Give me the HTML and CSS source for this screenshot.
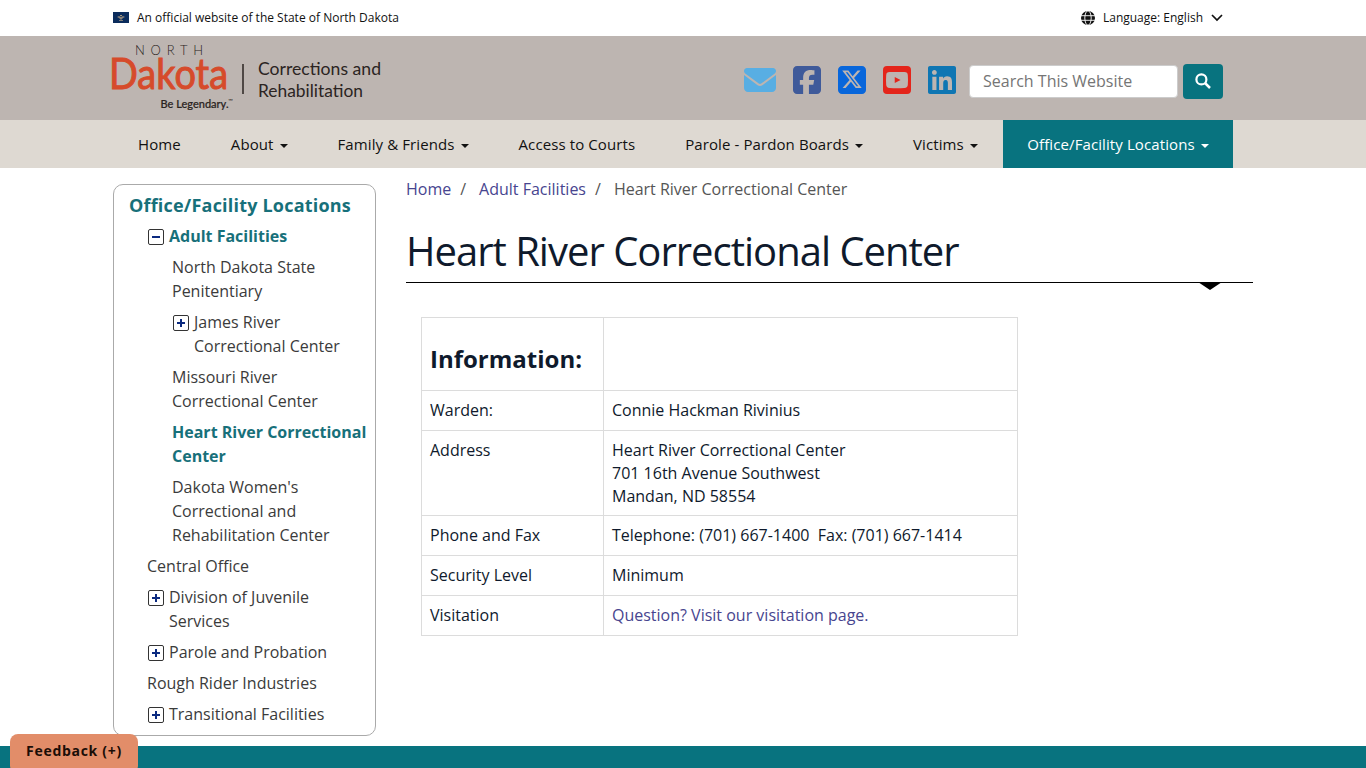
FILE: index.html
```html
<!DOCTYPE html>
<html lang="en">
<head>
    <meta charset="UTF-8">
    <meta name="viewport" content="width=device-width, initial-scale=1.0">
    <title>Heart River Correctional Center</title>
    <link rel="stylesheet" href="styles.css">
</head>
<body>

    <div class="topbar">
        <div class="container topbar-inner">
            <div class="official">
                <svg class="flag" viewBox="0 0 16 11">
                    <rect width="16" height="11" fill="#0b2c5c"/>
                    <path d="M4 5l2-1 2 1 2-1 2 1-2 1-2 2-2-2z" fill="#8b8378"/>
                    <path d="M7 3h2v1H7zM6 8h4v.7H6z" fill="#a79a82"/>
                </svg>
                <span>An official website of the State of North Dakota</span>
            </div>
            <div class="language">
                <svg class="globe" viewBox="0 0 14 14">
                    <circle cx="7" cy="7" r="7" fill="#111"/>
                    <path d="M0 4.7h14M0 9.3h14" stroke="#fff" stroke-width=".9"/>
                    <ellipse cx="7" cy="7" rx="3.2" ry="7.2" fill="none" stroke="#fff" stroke-width=".9"/>
                </svg>
                <span>Language: English</span>
                <svg class="chevron" viewBox="0 0 12 8"><path d="M1 1l5 5 5-5" fill="none" stroke="#111" stroke-width="1.7"/></svg>
            </div>
        </div>
    </div>

    <header class="header">
        <div class="container header-inner">
            <svg class="logo" width="272" height="72" viewBox="0 0 272 72">
                <text class="logo-north" x="22" y="15" textLength="68">NORTH</text>
                <text class="logo-dakota" x="-4" y="48.500" textLength="119" lengthAdjust="spacingAndGlyphs">Dakota</text>
                <text class="logo-small" x="47.500" y="67.500" textLength="68" lengthAdjust="spacingAndGlyphs">Be Legendary.</text>
                <text class="logo-tm" x="115" y="62.500">™</text>
                <path d="M130 24v30" stroke="#2b2422" stroke-width="1.500"/>
                <text class="logo-dept" x="145" y="35" textLength="123" lengthAdjust="spacingAndGlyphs">Corrections and</text>
                <text class="logo-dept" x="145" y="57" textLength="105" lengthAdjust="spacingAndGlyphs">Rehabilitation</text>
            </svg>
            <div class="header-tools">
                <div class="social">
                    <a href="#" class="mail"><svg viewBox="0 0 512 384"><path fill="#58aee3" d="M48 0C21.500 0 0 21.500 0 48c0 15.100 7.100 29.300 19.200 38.400l217.600 163.200c11.400 8.500 27 8.500 38.400 0l217.600-163.200c12.100-9.100 19.200-23.300 19.200-38.400 0-26.500-21.500-48-48-48H48zM0 112v208c0 35.300 28.700 64 64 64h384c35.300 0 64-28.700 64-64V112L294.400 275.200c-22.800 17.100-54 17.100-76.800 0L0 112z"/></svg></a>
                    <a href="#"><svg viewBox="0 0 448 448"><path fill="#3f5a9a" d="M64 0C28.700 0 0 28.700 0 64v320c0 35.300 28.700 64 64 64h98.200V301.300h-52.800V224h52.800v-33.700c0-87.100 39.400-127.500 125-127.500 16.200 0 44.200 3.200 55.700 6.400V140c-6-.6-16.500-1-29.600-1-42 0-58.200 15.900-58.200 57.200V224h83.600l-14.400 77.300h-69.300V448H384c35.300 0 64-28.700 64-64V64c0-35.300-28.700-64-64-64H64z"/></svg></a>
                    <a href="#"><svg viewBox="0 0 448 448"><path fill="#0866db" d="M64 0C28.700 0 0 28.700 0 64v320c0 35.300 28.700 64 64 64h320c35.300 0 64-28.700 64-64V64c0-35.300-28.700-64-64-64H64zm297.100 72L256.400 191.700 379.600 352h-96.400l-75.500-98.800L121.300 352h-48l112-128L67.200 72h98.800l68.300 90.300L313.200 72h47.900zm-36.300 251.800L153.400 99.100h-28.700l171.800 224.700h28.300z"/></svg></a>
                    <a href="#"><svg viewBox="0 0 448 448"><path fill="#e4251b" fill-rule="evenodd" d="M64 0h320a64 64 0 0 1 64 64v320a64 64 0 0 1-64 64H64a64 64 0 0 1-64-64V64A64 64 0 0 1 64 0zm42 97c-37 2-54 16-55 50-4 51-4 103 0 154 1 34 18 48 55 50 79 4 157 4 236 0 37-2 54-16 55-50 4-51 4-103 0-154-1-34-18-48-55-50-79-4-157-4-236 0zm82 79l93 48-93 48z"/></svg></a>
                    <a href="#"><svg viewBox="0 0 448 448"><path fill="#0f76b3" d="M416 0H31.900C14.300 0 0 14.500 0 32.300v383.400C0 433.500 14.300 448 31.900 448H416c17.600 0 32-14.500 32-32.300V32.300C448 14.500 433.600 0 416 0zM135.400 384H69V170.200h66.500V384h-.1zM102.200 141c-21.300 0-38.500-17.300-38.500-38.500S80.900 64 102.200 64c21.200 0 38.500 17.300 38.500 38.500 0 21.300-17.200 38.500-38.500 38.500zm282.100 243h-66.400V280c0-24.800-.5-56.700-34.500-56.700-34.600 0-39.900 27-39.900 54.900V384h-66.400V170.200h63.700v29.200h.9c8.900-16.800 30.600-34.500 62.900-34.500 67.200 0 79.700 44.300 79.700 101.900V384z"/></svg></a>
                </div>
                <form class="search">
                    <input type="text" class="search-input" placeholder="Search This Website">
                    <button type="button" class="search-btn" aria-label="Search">
                        <svg viewBox="0 0 16 16"><circle cx="6.400" cy="6.400" r="5" fill="none" stroke="#fff" stroke-width="2.200"/><path d="M10 10l5 5" stroke="#fff" stroke-width="2.500"/></svg>
                    </button>
                </form>
            </div>
        </div>
    </header>

    <nav class="nav">
        <ul class="container nav-list">
            <li><a href="#">Home</a></li>
            <li><a href="#">About<span class="caret"></span></a></li>
            <li><a href="#">Family &amp; Friends<span class="caret"></span></a></li>
            <li><a href="#">Access to Courts</a></li>
            <li><a href="#">Parole - Pardon Boards<span class="caret"></span></a></li>
            <li><a href="#">Victims<span class="caret"></span></a></li>
            <li class="active"><a href="#">Office/Facility Locations<span class="caret"></span></a></li>
        </ul>
    </nav>

    <div class="container page">
        <aside class="sidebar">
            <h2>Office/Facility Locations</h2>
            <ul class="menu">
                <li class="has-toggle current">
                    <span class="toggle minus"></span><a href="#">Adult Facilities</a>
                </li>
                <li>
                    <ul class="submenu">
                        <li><a href="#">North Dakota State Penitentiary</a></li>
                        <li class="has-toggle"><span class="toggle"></span><a href="#">James River Correctional Center</a></li>
                        <li><a href="#">Missouri River Correctional Center</a></li>
                        <li class="current"><a href="#">Heart River Correctional Center</a></li>
                        <li><a href="#">Dakota Women's Correctional and Rehabilitation Center</a></li>
                    </ul>
                </li>
                <li><a href="#">Central Office</a></li>
                <li class="has-toggle"><span class="toggle"></span><a href="#">Division of Juvenile Services</a></li>
                <li class="has-toggle"><span class="toggle"></span><a href="#">Parole and Probation</a></li>
                <li><a href="#">Rough Rider Industries</a></li>
                <li class="has-toggle"><span class="toggle"></span><a href="#">Transitional Facilities</a></li>
            </ul>
        </aside>

        <main class="content">
            <div class="breadcrumb">
                <a href="#">Home</a><span class="sep">/</span><a href="#">Adult Facilities</a><span class="sep">/</span><span>Heart River Correctional Center</span>
            </div>
            <h1>Heart River Correctional Center</h1>
            <table>
                <tr class="info">
                    <td><h3>Information:</h3></td>
                    <td></td>
                </tr>
                <tr>
                    <td>Warden:</td>
                    <td>Connie Hackman Rivinius</td>
                </tr>
                <tr>
                    <td>Address</td>
                    <td>Heart River Correctional Center<br>701 16th Avenue Southwest<br>Mandan, ND 58554</td>
                </tr>
                <tr>
                    <td>Phone and Fax</td>
                    <td>Telephone: (701) 667-1400&nbsp; Fax: (701) 667-1414</td>
                </tr>
                <tr>
                    <td>Security Level</td>
                    <td>Minimum</td>
                </tr>
                <tr>
                    <td>Visitation</td>
                    <td><a href="#">Question? Visit our visitation page.</a></td>
                </tr>
            </table>
        </main>
    </div>

    <footer class="footer"></footer>
    <button type="button" class="feedback">Feedback (+)</button>

</body>
</html>
```

FILE: styles.css
```css
* {
    box-sizing: border-box;
}
body {
    margin: 0;
    height: 768px;
    overflow: hidden;
    display: flex;
    flex-direction: column;
    font-family: "Open Sans", sans-serif;
    font-size: 16px;
    color: #0f1a2c;
    background: #fff;
}
a {
    color: #47458f;
    text-decoration: none;
}
ul {
    list-style: none;
    margin: 0;
    padding: 0;
}
svg {
    display: block;
}
.container {
    width: 1140px;
    margin: 0 auto;
}

/* top bar */
.topbar {
    height: 36px;
    font-size: 12px;
    color: #111;
}
.topbar-inner {
    height: 35px;
    display: flex;
    justify-content: space-between;
    align-items: center;
    padding-right: 30px;
}
.official, .language {
    display: flex;
    align-items: center;
}
.flag {
    width: 16px;
    height: 11px;
    margin-right: 8px;
}
.globe {
    width: 14px;
    height: 14px;
    margin-right: 8px;
}
.chevron {
    width: 12px;
    height: 8px;
    margin-left: 8px;
}

/* header */
.header {
    height: 84px;
    background: #bdb5b1;
}
.header-inner {
    height: 84px;
    display: flex;
    justify-content: space-between;
    padding-right: 30px;
}
.logo {
    margin-top: 4px;
    font-family: Lato, sans-serif;
    fill: #2b2422;
    overflow: visible;
}
.logo-north {
    font-size: 13px;
    font-weight: 300;
}
.logo-dakota {
    font-size: 42px;
    fill: #d64b2b;
    stroke: #d64b2b;
    stroke-width: 1px;
}
.logo-small {
    font-size: 11px;
    font-weight: 500;
    stroke: #2b2422;
    stroke-width: .2px;
}
.logo-tm {
    font-size: 6px;
}
.logo-dept {
    font-size: 18px;
}
.header-tools {
    display: flex;
    align-items: center;
    height: 90px;
}
.social {
    display: flex;
    align-items: center;
    gap: 17px;
    margin: -3px 13px 0 0;
}
.social svg {
    width: 28px;
    height: 28px;
}
.social .mail svg {
    width: 32px;
    height: 24px;
}
.search {
    display: flex;
    align-items: center;
    gap: 5px;
}
.search-input {
    width: 209px;
    height: 33px;
    padding: 0 13px;
    border: 1px solid #ccc;
    border-radius: 4px;
    font: 16px "Open Sans", sans-serif;
}
.search-input::placeholder {
    color: #757575;
}
.search-btn {
    width: 40px;
    height: 35px;
    padding: 0 12px;
    border: 0;
    border-radius: 4px;
    background: #08737f;
}

/* navigation */
.nav {
    height: 48px;
    background: #ded9d2;
}
.nav-list {
    display: flex;
}
.nav a {
    display: flex;
    align-items: center;
    height: 48px;
    padding: 0 25px;
    font-size: 15px;
    letter-spacing: .1px;
    color: #111;
}
.nav .active a {
    padding: 0 24.500px;
    background: #08737f;
    color: #fff;
    font-weight: 500;
}
.caret {
    margin: 3px 0 0 6px;
    border: 4px solid transparent;
    border-top-color: currentColor;
    border-bottom: 0;
}

/* side menu */
.page {
    display: flex;
    gap: 30px;
    align-items: flex-start;
    flex: none;
    height: 578px;
}
.sidebar {
    width: 263px;
    height: 552px;
    margin-top: 16px;
    padding: 8px 8px 0 15px;
    border: 1px solid #aaa;
    border-radius: 10px;
    line-height: 24px;
}
.sidebar h2 {
    margin: 0 0 7px;
    font-size: 18px;
    line-height: 24px;
    letter-spacing: .2px;
    color: #17707a;
}
.sidebar a {
    color: #3b3b3b;
}
.sidebar .current > a {
    color: #17707a;
    font-weight: 700;
}
.menu {
    padding-left: 18px;
}
.menu, .submenu {
    display: flex;
    flex-direction: column;
    gap: 7px;
}
.submenu {
    padding-left: 25px;
}
.has-toggle {
    display: flex;
    gap: 5px;
}
.toggle {
    flex: none;
    width: 16px;
    height: 16px;
    margin: 5px 0 0 1px;
    border: 1px solid #333;
    border-radius: 2px;
    background: linear-gradient(#0b2a80, #0b2a80) center / 8px 2px no-repeat,
                linear-gradient(#0b2a80, #0b2a80) center / 2px 8px no-repeat;
}
.toggle.minus {
    background: linear-gradient(#0b2a80, #0b2a80) center / 8px 2px no-repeat;
}

/* main content */
.content {
    flex: 1;
}
.breadcrumb {
    margin-top: 9px;
    line-height: 24px;
    color: #555;
}
.breadcrumb .sep {
    margin: 0 13px 0 9px;
}
h1 {
    position: relative;
    margin: 20px 0 34px;
    height: 61px;
    font-size: 40px;
    font-weight: 400;
    line-height: 60px;
    letter-spacing: -1px;
    color: #0f1a2c;
    border-bottom: 1px solid #000;
    box-sizing: content-box;
}
h1::after {
    content: "";
    position: absolute;
    right: 31px;
    bottom: -8px;
    border: 12px solid transparent;
    border-top: 8px solid #000;
    border-bottom: 0;
}
table {
    width: 597px;
    margin-left: 15px;
    border-collapse: collapse;
    table-layout: fixed;
}
td {
    padding: 8px;
    border: 1px solid #dcdcdc;
    line-height: 22.860px;
    vertical-align: top;
}
td:first-child {
    width: 182px;
}
.info td {
    height: 73px;
}
h3 {
    margin: 20px 0 0;
    font-size: 24px;
    line-height: 26px;
}

/* footer */
.footer {
    height: 22px;
    background: #08737f;
}
.feedback {
    position: absolute;
    left: 10px;
    top: 734px;
    width: 128px;
    height: 40px;
    padding: 0 0 8px;
    border: 0;
    border-radius: 8px;
    background: #e28d69;
    font: 700 14px "Open Sans", sans-serif;
    letter-spacing: .7px;
    color: #1b0d07;
}
```
